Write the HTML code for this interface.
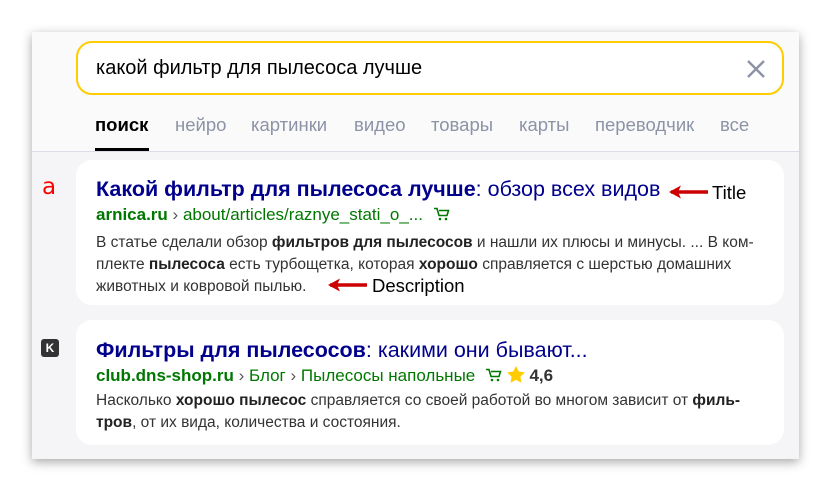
<!DOCTYPE html>
<html><head><meta charset="utf-8"><style>
*{margin:0;padding:0;box-sizing:border-box}
body{width:831px;height:491px;background:#fff;font-family:"Liberation Sans","DejaVu Sans",sans-serif;position:relative;overflow:hidden}
.panel{position:absolute;left:32px;top:32px;width:767px;height:427px;background:#f5f5f7;box-shadow:0 3px 10px rgba(0,0,0,.35);overflow:hidden}
.top{position:absolute;left:0;top:0;width:767px;height:120px;background:#fafafa;border-bottom:1px solid #dcdce4}
.search{position:absolute;left:44px;top:9px;width:708px;height:54px;border:2px solid #fc0;border-radius:16px;background:#fff}
.q{position:absolute;left:18px;top:14px;font-size:20px;color:#000;white-space:nowrap}
.x{position:absolute;right:16px;top:16px}
.tab{position:absolute;top:82px;font-size:18.5px;color:#8d93a6;white-space:nowrap}
.ul{position:absolute;left:63px;top:116px;width:54px;height:3px;background:#000}
.card{position:absolute;left:44px;width:708px;background:#fff;border-radius:16px}
.t{position:absolute;left:20px;font-size:21.5px;color:#00008c;white-space:nowrap}
.u{position:absolute;left:20px;font-size:17px;color:#007700;white-space:nowrap}
.d{position:absolute;left:20px;font-size:15.5px;color:#333;line-height:22px;white-space:nowrap}
.d b{color:#222}
.ann{position:absolute;font-size:18.5px;color:#000;white-space:nowrap}
</style></head><body>
<div class="panel">
<div class="top">
<div class="search"><div class="q">какой фильтр для пылесоса лучше</div>
<svg class="x" width="20" height="20" viewBox="0 0 20 20"><path d="M2 2L18 18M18 2L2 18" stroke="#8d93a6" stroke-width="2.4"/></svg></div>
<div class="tab" style="left:63px;color:#000;font-weight:bold">поиск</div>
<div class="tab" style="left:143px">нейро</div>
<div class="tab" style="left:219px">картинки</div>
<div class="tab" style="left:322px">видео</div>
<div class="tab" style="left:399px">товары</div>
<div class="tab" style="left:487px">карты</div>
<div class="tab" style="left:563px">переводчик</div>
<div class="tab" style="left:688px">все</div>
<div class="ul"></div>
</div>
<div style="position:absolute;left:10px;top:146px;color:#f00;font-size:23px;line-height:18px;font-family:'DejaVu Sans',sans-serif">a</div>
<div class="card" style="top:128px;height:145px">
<div class="t" style="top:17px"><b>Какой фильтр для пылесоса лучше</b>: обзор всех видов</div>
<div class="u" style="top:45px"><b>arnica.ru</b> <span style="color:#555">›</span> about/articles/raznye_stati_o_...
<svg width="16" height="14" viewBox="0 0 16 14" style="vertical-align:-1px;margin-left:6px"><path d="M0 1.5h3l2 7h8l1.5-5H5" fill="none" stroke="#070" stroke-width="1.6"/><circle cx="6" cy="12" r="1.3" fill="#070"/><circle cx="12" cy="12" r="1.3" fill="#070"/></svg></div>
<div class="d" style="top:72px">В статье сделали обзор <b>фильтров для пылесосов</b> и нашли их плюсы и минусы. ... В ком-<br>плекте <b>пылесоса</b> есть турбощетка, которая <b>хорошо</b> справляется с шерстью домашних<br>животных и ковровой пылью.</div>
</div>
<div style="position:absolute;left:9px;top:307px;width:18px;height:18px;background:#333;border-radius:3px;color:#fff;font-size:12px;font-weight:bold;text-align:center;line-height:18px">K</div>
<div class="card" style="top:288px;height:125px">
<div class="t" style="top:18px"><b>Фильтры для пылесосов</b>: какими они бывают...</div>
<div class="u" style="top:46px"><b>club.dns-shop.ru</b> <span style="color:#555">›</span> Блог <span style="color:#555">›</span> Пылесосы напольные
<svg width="16" height="14" viewBox="0 0 16 14" style="vertical-align:-1px;margin-left:6px"><path d="M0 1.5h3l2 7h8l1.5-5H5" fill="none" stroke="#070" stroke-width="1.6"/><circle cx="6" cy="12" r="1.3" fill="#070"/><circle cx="12" cy="12" r="1.3" fill="#070"/></svg>
<svg width="18" height="17" viewBox="0 0 24 23" style="vertical-align:-2px"><path d="M12 0l3.7 7.5 8.3 1.2-6 5.8 1.4 8.2L12 18.8 4.6 22.7 6 14.5 0 8.7l8.3-1.2z" fill="#fc0"/></svg>
<b style="color:#333">4,6</b></div>
<div class="d" style="top:70px">Насколько <b>хорошо пылесос</b> справляется со своей работой во многом зависит от <b>филь-</b><br><b>тров</b>, от их вида, количества и состояния.</div>
</div>
</div>
<svg style="position:absolute;left:668px;top:184px" width="42" height="16" viewBox="0 0 42 16"><path d="M3 8H40" stroke="#c00" stroke-width="3.5"/><path d="M1 8L13 1.5L10 8L13 14.5Z" fill="#c00"/></svg>
<div class="ann" style="left:712px;top:182px">Title</div>
<svg style="position:absolute;left:327px;top:277px" width="42" height="16" viewBox="0 0 42 16"><path d="M3 8H40" stroke="#c00" stroke-width="3.5"/><path d="M1 8L13 1.5L10 8L13 14.5Z" fill="#c00"/></svg>
<div class="ann" style="left:372px;top:275px">Description</div>
</body></html>
